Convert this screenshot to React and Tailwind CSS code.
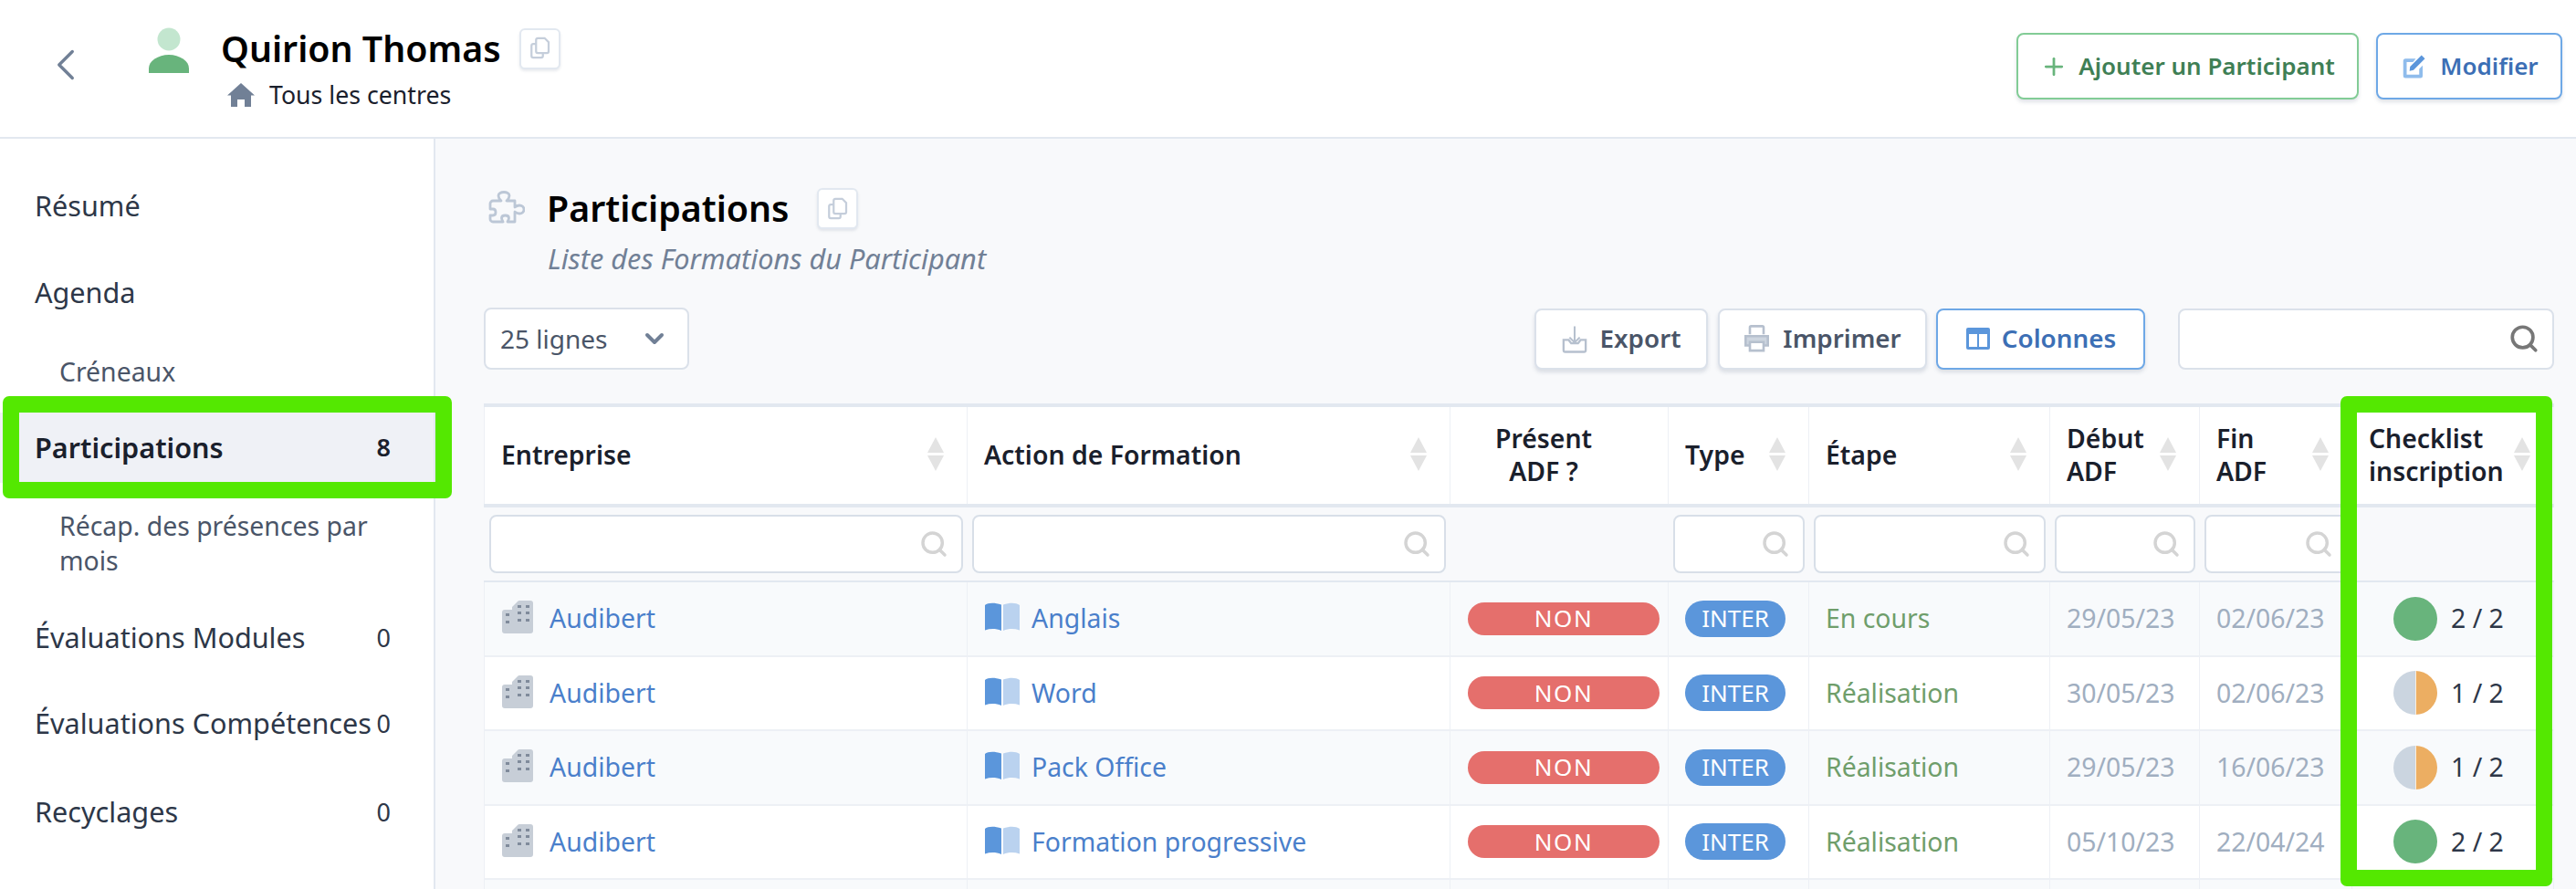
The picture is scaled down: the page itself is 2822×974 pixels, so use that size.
import { Plus, Search, ChevronDown, ChevronLeft } from 'lucide-react';

const CopyIcon = () => (
  <svg viewBox="0 0 24 24" className="w-[30px] h-[30px]" fill="none" stroke="#c5cedb" strokeWidth="1.800">
    <path d="M9 4.500a1.500 1.500 0 0 1 1.500-1.500h6l3.500 3.500v8a1.500 1.500 0 0 1-1.500 1.500h-8A1.500 1.500 0 0 1 9 14.500z" />
    <path d="M9 8H6.500A1.500 1.500 0 0 0 5 9.500v9A1.500 1.500 0 0 0 6.500 20h7a1.500 1.500 0 0 0 1.500-1.500V16" />
  </svg>
);

const CopyButton = ({ className }) => (
  <button className={`w-[45px] h-[45px] flex items-center justify-center bg-white border-2 border-[#e2e8f0] rounded-[6px] shadow-[0_2px_3px_rgba(100,116,139,0.15)] ${className}`}>
    <CopyIcon />
  </button>
);

const UserIcon = () => (
  <svg viewBox="0 0 44 50" className="w-[44px] h-[50px]">
    <circle cx="22" cy="13" r="12.500" fill="#c3e6cf" />
    <path d="M0 50v-5a22 15 0 0 1 44 0v5z" fill="#68b47c" />
  </svg>
);

const HomeIcon = () => (
  <svg viewBox="0 0 30 26" className="w-[30px] h-[26px]" fill="#718096">
    <path d="M15 0 30 13.500h-4V26h-7v-8h-8v8H4V13.500H0z" />
  </svg>
);

const PuzzleIcon = () => (
  <svg viewBox="0 0 40 40" className="w-[40px] h-[40px] ml-[5px] shrink-0" fill="none" stroke="#bcc7d6" strokeWidth="2.800" strokeLinejoin="round">
    <path d="M5 11h9c-2-2-3-4-3-5.500C11 3 14 1.500 17 1.500s6 1.500 6 4c0 1.500-1 3.500-3 5.500h9v7c2-1.500 3-2 5-2 3 0 5 2 5 4.500s-2 4.500-5 4.500c-2 0-3-.5-5-2v11H21c1-2 1.500-3 1.500-4 0-2-2-3-4-3s-4 1-4 3c0 1 .5 2 1.500 4H5a3 3 0 0 1-3-3V27h3c2 0 3-1.500 3-3.500S7 20 5 20H2v-6a3 3 0 0 1 3-3z" />
  </svg>
);

const EditIcon = () => (
  <svg viewBox="0 0 24 24" className="w-[30px] h-[30px]">
    <path d="M3 7a2 2 0 0 1 2-2h9l-2.500 3H6v11h11v-5l3-3v9a2 2 0 0 1-2 2H5a2 2 0 0 1-2-2z" fill="#8fbcec" />
    <path d="M9 12 19 2l3 3-10 10-3.500.7z" fill="#5b96db" />
  </svg>
);

const ExportIcon = () => (
  <svg viewBox="0 0 30 32" className="w-[28px] h-[31px]">
    <path d="M2 17h6l3 4h8l3-4h6v12a2 2 0 0 1-2 2H4a2 2 0 0 1-2-2z" fill="none" stroke="#b6c0ce" strokeWidth="2.500" />
    <path d="M15 1v19M9 14l6 6 6-6" fill="none" stroke="#b6c0ce" strokeWidth="2.200" />
  </svg>
);

const PrintIcon = () => (
  <svg viewBox="0 0 30 32" className="w-[29px] h-[30px]" fill="none" stroke="#b6c0ce" strokeWidth="2.800">
    <path d="M7 11V3a1.500 1.500 0 0 1 1.500-1.500h13A1.500 1.500 0 0 1 23 3v8" />
    <path d="M2 13h26v11H2z" fill="#cdd5df" />
    <path d="M7 20h16v10H7z" fill="#fff" />
  </svg>
);

const ColumnsIcon = () => (
  <svg viewBox="0 0 28 26" className="w-[28px] h-[26px]">
    <rect x="1" y="1" width="26" height="24" rx="2" fill="#5b96db" />
    <rect x="4" y="8" width="9" height="14" fill="#fff" />
    <rect x="15" y="8" width="9" height="14" fill="#fff" />
  </svg>
);

const BuildingIcon = () => (
  <svg viewBox="0 0 36 36" className="w-[36px] h-[36px] shrink-0 mb-[3px]">
    <path d="M4 10h8V7l6-6a3 3 0 0 1 2-1h12a3 3 0 0 1 3 3v30a3 3 0 0 1-3 3H4a3 3 0 0 1-3-3V13a3 3 0 0 1 3-3z" fill="#c7ced7" />
    <g fill="#808b9b">
      <rect x="18" y="5" width="4" height="3" /><rect x="27" y="5" width="4" height="3" />
      <rect x="18" y="12" width="4" height="3" /><rect x="27" y="12" width="4" height="3" />
      <rect x="18" y="20" width="4" height="3" /><rect x="27" y="20" width="4" height="3" />
      <rect x="5" y="14" width="4" height="3" /><rect x="5" y="22" width="4" height="3" />
    </g>
  </svg>
);

const BookIcon = () => (
  <svg viewBox="0 0 40 32" className="w-[40px] h-[32px] shrink-0 mb-[3px]">
    <path d="M1 3c3-2.500 10-3 18-.5V31c-6-2.500-12-2.500-18-.5z" fill="#5b96db" />
    <path d="M21 2.500c8-2.500 14-2 18 .5v27.500c-6-2-12-2-18 .5z" fill="#bad2ef" />
  </svg>
);

const SortIcon = () => (
  <svg viewBox="0 0 18 37" className="w-[18px] h-[37px] shrink-0" fill="#e3e3e3">
    <path d="M9 0 18 17H0z" />
    <path d="M0 20h18L9 37z" />
  </svg>
);

const FilterInput = () => (
  <div className="h-[64px] mx-[5px] flex items-center justify-end pr-[14px] bg-white border-2 border-[#d8dfe8] rounded-[8px]">
    <Search className="w-[32px] h-[32px] text-[#d4d4d4]" strokeWidth={2.600} />
  </div>
);

const Pie = ({ done }) => (
  done === 2 ? (
    <span className="w-[48px] h-[48px] rounded-full bg-[#68b47c]" />
  ) : (
    <span className="w-[48px] h-[48px] rounded-full flex overflow-hidden">
      <span className="w-1/2 bg-[#cbd5e0]" />
      <span className="w-1/2 bg-[#ecae62] border-l border-[#fbeedd]" />
    </span>
  )
);

const sideItems = [
  { label: 'Résumé', cls: 'h-[94px] mt-[27px] pl-[38px] text-[30.6px]' },
  { label: 'Agenda', cls: 'h-[94px] mt-px pl-[38px] text-[30.6px]' },
  { label: 'Créneaux', cls: 'h-[78px] pl-[65px] text-[28.4px] text-[#4a5568]' },
  { label: 'Participations', count: 8, cls: 'h-[77px] mt-[6px] pl-[38px] bg-[#eff1f6] text-[30.6px] font-semibold text-[#1a202c]' },
  { label: 'Récap. des présences par mois', cls: 'h-[110px] mt-[11px] pl-[65px] text-[28.4px] text-[#4a5568] leading-[38px]' },
  { label: 'Évaluations Modules', count: 0, cls: 'h-[94px] mt-[2px] pl-[38px] text-[30.6px]' },
  { label: 'Évaluations Compétences', count: 0, cls: 'h-[94px] pl-[38px] text-[30.6px]' },
  { label: 'Recyclages', count: 0, cls: 'h-[94px] mt-[3px] pl-[38px] text-[30.6px]' },
];

const rows = [
  { formation: 'Anglais', etape: 'En cours', debut: '29/05/23', fin: '02/06/23', done: 2 },
  { formation: 'Word', etape: 'Réalisation', debut: '30/05/23', fin: '02/06/23', done: 1 },
  { formation: 'Pack Office', etape: 'Réalisation', debut: '29/05/23', fin: '16/06/23', done: 1 },
  { formation: 'Formation progressive', etape: 'Réalisation', debut: '05/10/23', fin: '22/04/24', done: 2 },
];

const Head = ({ children }) => (
  <th className="border-x border-[#edf0f5] px-0 pb-[3px] font-semibold text-left align-middle">
    <div className="flex items-center justify-between pl-[18px] pr-[25px] leading-[36px]">
      <span>{children}</span>
      <SortIcon />
    </div>
  </th>
);

export default function App() {
  return (
    <div className="relative w-[2822px] h-[974px] overflow-hidden bg-white font-['Noto_Sans',sans-serif] text-[26px] text-[#1a202c]">
      {/* Top bar */}
      <header className="h-[152px] flex border-b-2 border-[#e2e8f0] pl-[43px] pr-[15px]">
        <ChevronLeft className="w-[58px] h-[58px] mt-[42px] text-[#718096]" strokeWidth={1.400} />
        <div className="ml-[62px] mt-[30px]">
          <UserIcon />
        </div>
        <div className="ml-[35px] mt-[28px]">
          <div className="flex items-center h-[50px]">
            <span className="text-[39.3px] font-semibold text-black leading-[50px]">Quirion Thomas</span>
            <CopyButton className="ml-[20px]" />
          </div>
          <div className="flex items-center h-[30px] mt-[11px] ml-[7px] text-[26.7px]">
            <HomeIcon />
            <span className="ml-[16px]">Tous les centres</span>
          </div>
        </div>
        <div className="ml-auto flex gap-[19px] mt-[36px] h-[73px]">
          <button className="w-[375px] flex items-center justify-center gap-[12px] bg-white border-2 border-[#82cc96] rounded-[8px] shadow-[0_3px_4px_rgba(100,116,139,0.2)] font-semibold text-[#3f7f55]">
            <Plus className="w-[30px] h-[30px] text-[#68b47c]" strokeWidth={2.200} />
            Ajouter un Participant
          </button>
          <button className="w-[204px] flex items-center justify-center gap-[14px] bg-white border-2 border-[#6ea8e6] rounded-[8px] shadow-[0_3px_4px_rgba(100,116,139,0.2)] font-semibold text-[#3c6fb5]">
            <EditIcon />
            Modifier
          </button>
        </div>
      </header>

      <div className="flex h-[822px]">
        {/* Side menu */}
        <aside className="w-[477px] shrink-0 border-r-2 border-[#e2e8f0] text-[#2d3748]">
          {sideItems.map((item) => (
            <div key={item.label} className={`flex items-center pr-[47px] ${item.cls}`}>
              <span className="flex-1">{item.label}</span>
              {item.count !== undefined && <span className="text-[27px] ml-[4px]">{item.count}</span>}
            </div>
          ))}
        </aside>

        {/* Participations */}
        <main className="flex-1 bg-[#f8f9fb] pl-[53px] pr-[25px]">
          <div className="flex items-center mt-[53px] h-[47px]">
            <PuzzleIcon />
            <span className="ml-[24px] text-[39.3px] font-semibold text-black">Participations</span>
            <CopyButton className="ml-[30px]" />
          </div>
          <p className="ml-[70px] mt-[13px] h-[36px] italic text-[30.7px] leading-[36px] text-[#718096]">Liste des Formations du Participant</p>

          <div className="flex items-center mt-[36px] h-[68px] text-[27.8px]">
            <div className="w-[225px] h-[68px] flex items-center justify-between pl-[16px] pr-[20px] bg-white border-2 border-[#dbe1ea] rounded-[8px] text-[28px] text-[#4a5568]">
              25 lignes
              <ChevronDown className="w-[32px] h-[32px] text-[#718096]" strokeWidth={3} />
            </div>
            <button className="ml-auto w-[190px] h-[67px] flex items-center justify-center gap-[14px] bg-white border-2 border-[#dbe1ea] rounded-[8px] shadow-[0_3px_4px_rgba(100,116,139,0.2)] font-semibold text-[#4a5568]">
              <ExportIcon />
              Export
            </button>
            <button className="ml-[11px] w-[229px] h-[67px] flex items-center justify-center gap-[14px] bg-white border-2 border-[#dbe1ea] rounded-[8px] shadow-[0_3px_4px_rgba(100,116,139,0.2)] font-semibold text-[#4a5568]">
              <PrintIcon />
              Imprimer
            </button>
            <button className="ml-[10px] w-[229px] h-[67px] flex items-center justify-center gap-[12px] bg-white border-2 border-[#6ea8e6] rounded-[8px] shadow-[0_3px_4px_rgba(100,116,139,0.2)] font-semibold text-[#3c6fb5]">
              <ColumnsIcon />
              Colonnes
            </button>
            <div className="ml-[36px] w-[412px] h-[67px] flex items-center justify-end pr-[14px] bg-white border-2 border-[#dbe1ea] rounded-[8px]">
              <Search className="w-[34px] h-[34px] text-[#777777]" strokeWidth={2.600} />
            </div>
          </div>

          <table className="mt-[37px] table-fixed w-[2267px] border-collapse text-[28.4px]">
            <colgroup>
              <col className="w-[529px]" />
              <col className="w-[529px]" />
              <col className="w-[239px]" />
              <col className="w-[154px]" />
              <col className="w-[264px]" />
              <col className="w-[164px]" />
              <col className="w-[167px]" />
              <col className="w-[221px]" />
            </colgroup>
            <thead>
              <tr className="h-[110px] bg-white border-y-[4px] border-[#e2e8f0] leading-[36px]">
                <Head>Entreprise</Head>
                <Head>Action de Formation</Head>
                <th className="border-x border-[#edf0f5] pb-[3px] font-semibold text-center pl-[16px] pr-[50px]">Présent<br />ADF ?</th>
                <Head>Type</Head>
                <Head>Étape</Head>
                <Head>Début<br />ADF</Head>
                <Head>Fin<br />ADF</Head>
                <Head>Checklist<br />inscription</Head>
              </tr>
              <tr className="h-[83px] border-b-2 border-[#e2e8f0]">
                <td><FilterInput /></td>
                <td><FilterInput /></td>
                <td />
                <td><FilterInput /></td>
                <td><FilterInput /></td>
                <td><FilterInput /></td>
                <td><FilterInput /></td>
                <td />
              </tr>
            </thead>
            <tbody>
              {rows.map((row, i) => (
                <tr key={row.formation} className={`h-[81.5px] border-b-2 border-[#edf0f5] ${i % 2 === 0 ? 'bg-[#f8fafc]' : 'bg-white'}`}>
                  <td className="border-x border-[#edf0f5] pl-[18px]">
                    <div className="flex items-center gap-[17px] text-[#4a7fcb]">
                      <BuildingIcon />
                      Audibert
                    </div>
                  </td>
                  <td className="border-x border-[#edf0f5] pl-[18px]">
                    <div className="flex items-center gap-[12px] text-[#4a7fcb]">
                      <BookIcon />
                      {row.formation}
                    </div>
                  </td>
                  <td className="border-x border-[#edf0f5] pl-[19px]">
                    <div className="w-[210px] h-[36px] flex items-center justify-center rounded-full bg-[#e56f6c] text-white text-[26px] tracking-[1.500px]">NON</div>
                  </td>
                  <td className="border-x border-[#edf0f5] pl-[18px]">
                    <div className="w-[110px] h-[40px] flex items-center justify-center rounded-full bg-[#5b96db] text-white text-[26px]">INTER</div>
                  </td>
                  <td className="border-x border-[#edf0f5] pl-[18px] text-[#6f9e6b]">{row.etape}</td>
                  <td className="border-x border-[#edf0f5] pl-[18px] text-[#a0aec0]">{row.debut}</td>
                  <td className="border-x border-[#edf0f5] pl-[18px] text-[#a0aec0]">{row.fin}</td>
                  <td className="border-x border-[#edf0f5] pl-[45px]">
                    <div className="flex items-center gap-[15px] text-[#2d3748]">
                      <Pie done={row.done} />
                      {row.done} / 2
                    </div>
                  </td>
                </tr>
              ))}
              <tr className="h-[20px] bg-[#f8fafc]">
                <td className="border-x border-[#edf0f5]" />
                <td className="border-x border-[#edf0f5]" />
                <td className="border-x border-[#edf0f5]" />
                <td className="border-x border-[#edf0f5]" />
                <td className="border-x border-[#edf0f5]" />
                <td className="border-x border-[#edf0f5]" />
                <td className="border-x border-[#edf0f5]" />
                <td className="border-x border-[#edf0f5]" />
              </tr>
            </tbody>
          </table>
        </main>
      </div>

      {/* Green highlights drawn over the screenshot */}
      <div className="absolute left-[3px] top-[434px] w-[492px] h-[112px] border-[18px] border-[#54e801] rounded-[7px]" />
      <div className="absolute left-[2564px] top-[434px] w-[232px] h-[537px] border-[18px] border-[#54e801] rounded-[7px]" />
    </div>
  );
}
